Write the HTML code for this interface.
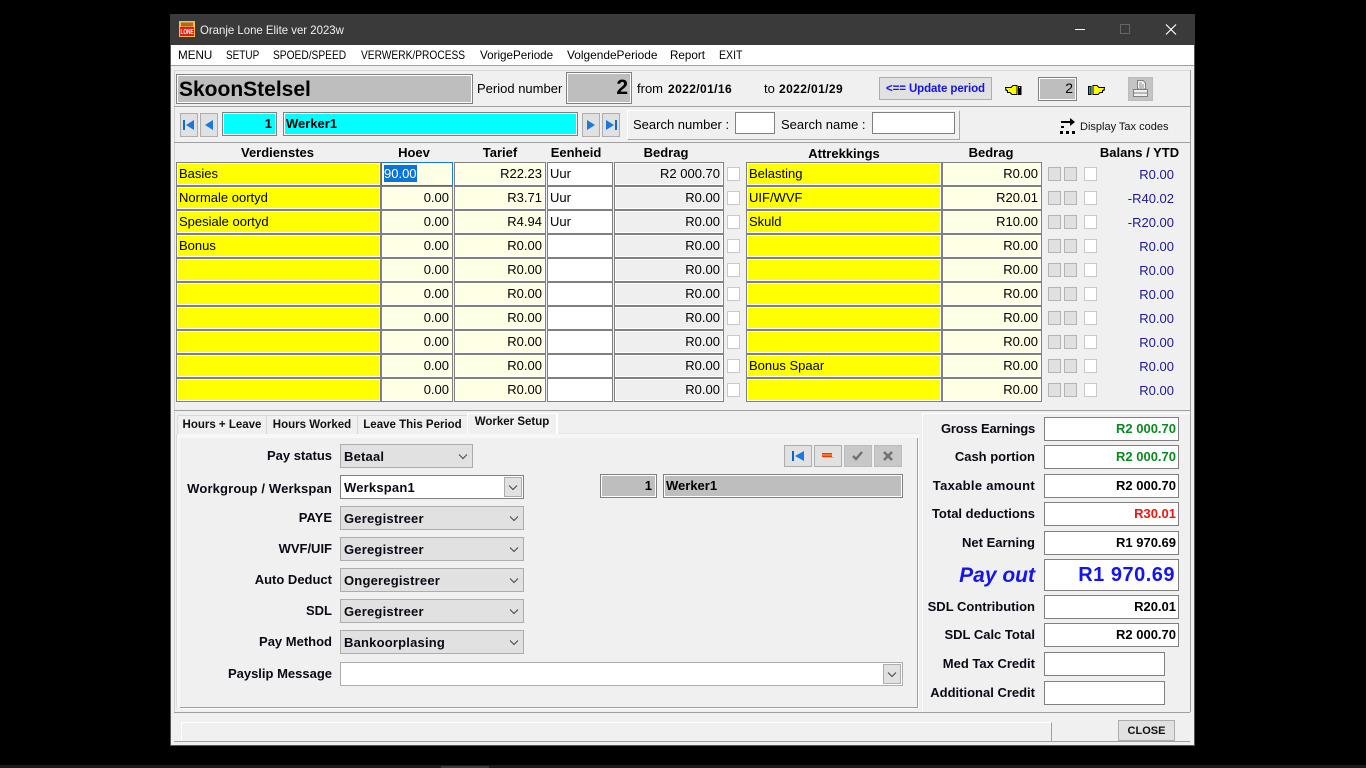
<!DOCTYPE html>
<html><head><meta charset="utf-8"><title>Oranje Lone Elite</title>
<style>
html,body{margin:0;padding:0;background:#000;width:1366px;height:768px;overflow:hidden}
*{box-sizing:border-box}
body{font-family:"Liberation Sans",Arial,sans-serif;font-size:13px;color:#000;position:relative}
.a,.t,.f,.r>div{position:absolute}
.t{white-space:nowrap;line-height:16px}
.lb{font-weight:bold;text-align:right;white-space:nowrap;position:absolute;line-height:16px;font-size:13px;color:#0a0a14;direction:rtl;unicode-bidi:plaintext}
.f{border:1px solid #808080;box-shadow:inset 0 0 0 1px #fff;white-space:nowrap;overflow:hidden;padding:0 2px;line-height:20px}
.r{position:absolute;left:0;top:0;width:1366px;height:24px}
.r>div{top:0;height:24px;border:1px solid #808080;box-shadow:inset 0 0 0 1px #fff;line-height:21px;padding:0 3px;white-space:nowrap;overflow:hidden}
.r>.c1{left:176px;width:205px;background:#ff0;padding-left:2px}
.r>.c2{left:381px;width:72px;background:#ffffe6;text-align:right;padding-right:3px}
.r>.c3{left:454px;width:92px;background:#ffffe6;text-align:right}
.r>.c4{left:547px;width:66px;background:#fff;padding-left:2px}
.r>.c5{left:614px;width:110px;background:#efefef;text-align:right}
.r>.c6{left:746px;width:196px;background:#ff0;padding-left:2px}
.r>.c7{left:942px;width:100px;background:#ffffe6;text-align:right}
.r>.k{top:5px;height:14px;width:13px;border:1px solid #c8c8c8;background:#fff;box-shadow:none;padding:0}
.r>.k1{left:727px}.r>.k2{left:1084px}
.r>.g{top:5px;height:14px;width:13px;border:1px solid #b4b4b4;background:#e1e1e1;box-shadow:none;padding:0}
.r>.g1{left:1048px}.r>.g2{left:1064px}
.r>.y{left:1090px;width:84px;text-align:right;border:0;box-shadow:none;background:none;color:#1a1a96;padding:0;top:2px}
.h{position:absolute;font-weight:bold;text-align:center;white-space:nowrap;line-height:16px}
.btn{position:absolute;border:1px solid #adadad;background:#e1e1e1}
.sel{position:absolute;left:340px;width:184px;height:24px;border:1px solid #adadad;background:#e1e1e1;font-weight:bold;padding-left:3px;line-height:24px;letter-spacing:.2px;color:#0a0a14}
.sel svg{position:absolute;right:2px;top:8px}
.val{position:absolute;left:1044px;width:135px;height:24px;border:1px solid #808080;background:#fff;text-align:right;font-weight:bold;padding-right:2px;line-height:22px}
.tab{position:absolute;top:415px;height:19px;border:1px solid #d9d9d9;border-bottom:0;background:#f0f0f0;font-size:11.5px;font-weight:bold;text-align:center;line-height:18px;color:#111;white-space:nowrap}
.m{position:absolute;top:47px;font-size:12px;line-height:16px;color:#000;white-space:nowrap;transform-origin:left center}
.ln{position:absolute;background:#a0a0a0}
.wl{position:absolute;background:#fff}
</style></head><body>

<div class="a" style="left:0;top:765px;width:1366px;height:3px;background:#1a1a1a"></div>
<div class="a" style="left:441px;top:766px;width:48px;height:2px;background:#3a3a3a"></div>

<!-- window -->
<div class="a" style="left:170px;top:14px;width:1025px;height:732px;background:#f0f0f0;border:1px solid #555"></div>
<div class="a" style="left:170px;top:14px;width:1025px;height:31px;background:#3a3a3a"></div>
<svg class="a" style="left:179px;top:21px" width="16" height="16" viewBox="0 0 16 16"><rect width="16" height="16" fill="#f6bc50"/><rect x="2" y="1.5" width="12" height="4" fill="#b06a20"/><rect x="1" y="6" width="14" height="9" fill="#e81c10"/><text x="8" y="13" font-size="7" font-weight="bold" fill="#fff" text-anchor="middle" textLength="13" lengthAdjust="spacingAndGlyphs" font-family="Liberation Sans">LONE</text></svg>
<div class="t" style="left:200px;top:22px;color:#f0f0f0;font-size:12px;transform:scaleX(.95);transform-origin:left center">Oranje Lone Elite ver 2023w</div>
<svg class="a" style="left:1075px;top:24px" width="102" height="14" viewBox="0 0 102 14"><line x1="0" y1="5.5" x2="10" y2="5.5" stroke="#fff"/><rect x="45.5" y="0.5" width="9" height="9" fill="none" stroke="#666"/><path d="M91 0.5L101 10.5M101 0.5L91 10.5" stroke="#fff" stroke-width="1.2"/></svg>

<div class="a" style="left:171px;top:45px;width:1023px;height:20px;background:#fff"></div>
<div class="ln" style="left:171px;top:65px;width:1023px;height:1px"></div>
<div class="m" style="left:178px;transform:scaleX(.97)">MENU</div>
<div class="m" style="left:226px;transform:scaleX(.83)">SETUP</div>
<div class="m" style="left:273px;transform:scaleX(.85)">SPOED/SPEED</div>
<div class="m" style="left:361px;transform:scaleX(.85)">VERWERK/PROCESS</div>
<div class="m" style="left:480px;transform:scaleX(.97)">VorigePeriode</div>
<div class="m" style="left:567px;transform:scaleX(.99)">VolgendePeriode</div>
<div class="m" style="left:670px;transform:scaleX(.97)">Report</div>
<div class="m" style="left:719px;transform:scaleX(.88)">EXIT</div>

<div class="ln" style="left:174px;top:70px;width:1016px;height:1px;background:#d8d8d8"></div>
<div class="ln" style="left:1190px;top:70px;width:1px;height:642px"></div>
<div class="ln" style="left:174px;top:70px;width:1px;height:642px;background:#d0d0d0"></div>
<div class="ln" style="left:174px;top:106px;width:1016px;height:1px"></div>
<div class="ln" style="left:174px;top:142px;width:1016px;height:1px"></div>
<div class="ln" style="left:174px;top:410px;width:1016px;height:1px"></div>
<div class="ln" style="left:174px;top:712px;width:1016px;height:1px"></div>

<!-- header row -->
<div class="f" style="left:176px;top:74px;width:297px;height:30px;background:#bebebe;font-weight:bold;font-size:21px;line-height:29px;padding-left:2px">SkoonStelsel</div>
<div class="t" style="left:477px;top:81px">Period number</div>
<div class="f" style="left:566px;top:72px;width:66px;height:32px;background:#bebebe;font-weight:bold;font-size:21px;line-height:29px;text-align:right;padding-right:3px">2</div>
<div class="t" style="left:637px;top:81px">from</div>
<div class="t" style="left:668px;top:81px;font-weight:bold;font-size:12px;letter-spacing:.4px">2022/01/16</div>
<div class="t" style="left:764px;top:81px">to</div>
<div class="t" style="left:779px;top:81px;font-weight:bold;font-size:12px;letter-spacing:.4px">2022/01/29</div>
<div class="btn" style="left:879px;top:77px;width:113px;height:23px;background:#e1e1e1;color:#1414e6;font-weight:bold;font-size:11.5px;text-align:center;line-height:23px;letter-spacing:-.1px">&lt;== Update period</div>
<svg class="a" style="left:1005px;top:84px" width="17" height="12" viewBox="0 0 17 12"><path d="M0 3.5H6L8 1.5H12V10.5H7L5 8.5H2.5V6.5H1V5H0Z" fill="#ff0" stroke="#000" stroke-width="1"/><rect x="13" y="2" width="3.5" height="9" fill="#000"/><rect x="14" y="3" width="1" height="1" fill="#ff0"/></svg>
<div class="f" style="left:1038px;top:77px;width:39px;height:24px;background:#bebebe;text-align:right;font-size:14px;line-height:21px;padding-right:3px">2</div>
<svg class="a" style="left:1088px;top:84px" width="17" height="12" viewBox="0 0 17 12"><path d="M17 3.5H11L9 1.5H5V10.5H10L12 8.5H14.5V6.5H16V5H17Z" fill="#ff0" stroke="#000" stroke-width="1"/><rect x="0" y="2" width="3.5" height="9" fill="#000"/><rect x="1" y="3" width="1.5" height="7" fill="#0ab0b0"/></svg>
<div class="a" style="left:1128px;top:77px;width:25px;height:24px;background:#c4c4c4;border:1px solid #bcbcbc"></div>
<svg class="a" style="left:1132px;top:80px" width="17" height="18" viewBox="0 0 17 18"><path d="M5.5 .5H11L13.5 3V9H5.5Z" fill="#f4f4f4" stroke="#808080"/><path d="M7 3H10M7 5H12M7 7H12" stroke="#909090"/><path d="M1.5 9.5H15.5V16.5H1.5Z" fill="#f0f0f0" stroke="#808080"/><path d="M1.5 13H15.5" stroke="#808080"/></svg>

<!-- worker row -->
<div class="btn" style="left:180px;top:113px;width:18px;height:24px"></div>
<svg class="a" style="left:182px;top:119px" width="14" height="12" viewBox="0 0 14 12"><rect x="1" y="1" width="2" height="10" fill="#1068d0"/><path d="M12 1V11L4 6Z" fill="#1a78e0"/></svg>
<div class="btn" style="left:200px;top:113px;width:18px;height:24px"></div>
<svg class="a" style="left:203px;top:119px" width="12" height="12" viewBox="0 0 12 12"><path d="M10 1V11L2 6Z" fill="#1a78e0"/></svg>
<div class="f" style="left:222px;top:112px;width:55px;height:24px;background:#0ff;text-align:right;font-weight:bold;line-height:21px;padding-right:4px;font-size:13px">1</div>
<div class="f" style="left:283px;top:112px;width:295px;height:24px;background:#0ff;font-weight:bold;line-height:22px;font-size:13px">Werker1</div>
<div class="btn" style="left:582px;top:113px;width:18px;height:24px"></div>
<svg class="a" style="left:585px;top:119px" width="12" height="12" viewBox="0 0 12 12"><path d="M2 1V11L10 6Z" fill="#1a78e0"/></svg>
<div class="btn" style="left:602px;top:113px;width:18px;height:24px"></div>
<svg class="a" style="left:604px;top:119px" width="14" height="12" viewBox="0 0 14 12"><path d="M2 1V11L10 6Z" fill="#1a78e0"/><rect x="11" y="1" width="2" height="10" fill="#1068d0"/></svg>

<div class="a" style="left:627px;top:110px;width:333px;height:30px;border:1px solid #a8a8a8;border-top-color:#fff;border-left-color:#fff"></div>
<div class="t" style="left:633px;top:117px">Search number :</div>
<div class="a" style="left:735px;top:112px;width:40px;height:22px;background:#fff;border:1px solid #808080"></div>
<div class="t" style="left:781px;top:117px">Search name :</div>
<div class="a" style="left:872px;top:112px;width:83px;height:22px;background:#fff;border:1px solid #808080"></div>
<svg class="a" style="left:1060px;top:117px" width="16" height="17" viewBox="0 0 16 17"><path d="M1 4H10V1L15 5L10 9V6H1Z" fill="#000"/><rect x="1" y="9" width="3" height="2" fill="#000"/><rect x="0" y="14" width="3" height="3" fill="#000"/><rect x="6" y="14" width="3" height="3" fill="#000"/><rect x="12" y="14" width="3" height="3" fill="#000"/></svg>
<div class="t" style="left:1080px;top:119px;font-size:11px;color:#111">Display Tax codes</div>

<!-- headers -->
<div class="h" style="left:176px;top:145px;width:203px">Verdienstes</div>
<div class="h" style="left:381px;top:145px;width:66px">Hoev</div>
<div class="h" style="left:454px;top:145px;width:92px">Tarief</div>
<div class="h" style="left:547px;top:145px;width:58px">Eenheid</div>
<div class="h" style="left:614px;top:145px;width:104px">Bedrag</div>
<div class="h" style="left:746px;top:146px;width:196px">Attrekkings</div>
<div class="h" style="left:942px;top:145px;width:98px">Bedrag</div>
<div class="h" style="left:1099px;top:145px;width:81px">Balans / YTD</div>

<!-- rows -->
<div class="r" style="top:162px"><div class="c1">Basies</div><div class="c2" style="text-align:left;padding-left:2px;border-color:#1a78d8;box-shadow:none"><span style="background:#0a74d8;color:#fff;display:inline-block;line-height:17px;margin-top:2px;vertical-align:top">90.00</span></div><div class="c3">R22.23</div><div class="c4">Uur</div><div class="c5">R2 000.70</div><div class="k k1"></div><div class="c6">Belasting</div><div class="c7">R0.00</div><div class="g g1"></div><div class="g g2"></div><div class="k k2"></div><div class="y">R0.00</div></div>
<div class="r" style="top:186px"><div class="c1">Normale oortyd</div><div class="c2">0.00</div><div class="c3">R3.71</div><div class="c4">Uur</div><div class="c5">R0.00</div><div class="k k1"></div><div class="c6">UIF/WVF</div><div class="c7">R20.01</div><div class="g g1"></div><div class="g g2"></div><div class="k k2"></div><div class="y">-R40.02</div></div>
<div class="r" style="top:210px"><div class="c1">Spesiale oortyd</div><div class="c2">0.00</div><div class="c3">R4.94</div><div class="c4">Uur</div><div class="c5">R0.00</div><div class="k k1"></div><div class="c6">Skuld</div><div class="c7">R10.00</div><div class="g g1"></div><div class="g g2"></div><div class="k k2"></div><div class="y">-R20.00</div></div>
<div class="r" style="top:234px"><div class="c1">Bonus</div><div class="c2">0.00</div><div class="c3">R0.00</div><div class="c4"></div><div class="c5">R0.00</div><div class="k k1"></div><div class="c6"></div><div class="c7">R0.00</div><div class="g g1"></div><div class="g g2"></div><div class="k k2"></div><div class="y">R0.00</div></div>
<div class="r" style="top:258px"><div class="c1"></div><div class="c2">0.00</div><div class="c3">R0.00</div><div class="c4"></div><div class="c5">R0.00</div><div class="k k1"></div><div class="c6"></div><div class="c7">R0.00</div><div class="g g1"></div><div class="g g2"></div><div class="k k2"></div><div class="y">R0.00</div></div>
<div class="r" style="top:282px"><div class="c1"></div><div class="c2">0.00</div><div class="c3">R0.00</div><div class="c4"></div><div class="c5">R0.00</div><div class="k k1"></div><div class="c6"></div><div class="c7">R0.00</div><div class="g g1"></div><div class="g g2"></div><div class="k k2"></div><div class="y">R0.00</div></div>
<div class="r" style="top:306px"><div class="c1"></div><div class="c2">0.00</div><div class="c3">R0.00</div><div class="c4"></div><div class="c5">R0.00</div><div class="k k1"></div><div class="c6"></div><div class="c7">R0.00</div><div class="g g1"></div><div class="g g2"></div><div class="k k2"></div><div class="y">R0.00</div></div>
<div class="r" style="top:330px"><div class="c1"></div><div class="c2">0.00</div><div class="c3">R0.00</div><div class="c4"></div><div class="c5">R0.00</div><div class="k k1"></div><div class="c6"></div><div class="c7">R0.00</div><div class="g g1"></div><div class="g g2"></div><div class="k k2"></div><div class="y">R0.00</div></div>
<div class="r" style="top:354px"><div class="c1"></div><div class="c2">0.00</div><div class="c3">R0.00</div><div class="c4"></div><div class="c5">R0.00</div><div class="k k1"></div><div class="c6">Bonus Spaar</div><div class="c7">R0.00</div><div class="g g1"></div><div class="g g2"></div><div class="k k2"></div><div class="y">R0.00</div></div>
<div class="r" style="top:378px"><div class="c1"></div><div class="c2">0.00</div><div class="c3">R0.00</div><div class="c4"></div><div class="c5">R0.00</div><div class="k k1"></div><div class="c6"></div><div class="c7">R0.00</div><div class="g g1"></div><div class="g g2"></div><div class="k k2"></div><div class="y">R0.00</div></div>

<!-- tabs panel -->
<div class="a" style="left:176px;top:433px;width:743px;height:275px;border:1px solid #dcdcdc;border-right:0;border-bottom:0;background:#f7f7f7"></div>
<div class="a" style="left:180px;top:438px;width:738px;height:270px;background:#f0f0f0;border-right:1px solid #a0a0a0;border-bottom:1px solid #a0a0a0;box-shadow:0 1px 0 #fff,1px 0 0 #fff"></div>
<div class="wl" style="left:176px;top:433px;width:743px;height:1px;background:#e8e8e8"></div>
<div class="tab" style="left:177px;width:90px">Hours + Leave</div>
<div class="tab" style="left:266px;width:92px">Hours Worked</div>
<div class="tab" style="left:357px;width:111px">Leave This Period</div>
<div class="tab" style="left:467px;top:413px;width:91px;height:21px;line-height:17px;border-color:#fff;border-width:1px 2px 0 1px;background:#f0f0f0">Worker Setup</div>

<div class="lb" style="left:180px;width:152px;top:448px">Pay status</div>
<div class="lb" style="left:180px;width:152px;top:481px;letter-spacing:.15px">Workgroup / Werkspan</div>
<div class="lb" style="left:180px;width:152px;top:510px">PAYE</div>
<div class="lb" style="left:180px;width:152px;top:541px">WVF/UIF</div>
<div class="lb" style="left:180px;width:152px;top:572px">Auto Deduct</div>
<div class="lb" style="left:180px;width:152px;top:603px">SDL</div>
<div class="lb" style="left:180px;width:152px;top:634px">Pay Method</div>
<div class="lb" style="left:180px;width:152px;top:666px">Payslip Message</div>

<div class="sel" style="top:444px;width:133px">Betaal<svg width="14" height="8" viewBox="0 0 14 8"><path d="M3 1.5L7 5.5L11 1.5" fill="none" stroke="#444"/></svg></div>
<div class="sel" style="top:475px;background:#fff;border-color:#808080">Werkspan1<div class="a" style="right:1px;top:1px;width:18px;height:20px;background:#e1e1e1;border:1px solid #adadad"></div><svg width="14" height="8" viewBox="0 0 14 8" style="right:3px"><path d="M3 1.5L7 5.5L11 1.5" fill="none" stroke="#444"/></svg></div>
<div class="sel" style="top:506px">Geregistreer<svg width="14" height="8" viewBox="0 0 14 8"><path d="M3 1.5L7 5.5L11 1.5" fill="none" stroke="#444"/></svg></div>
<div class="sel" style="top:537px">Geregistreer<svg width="14" height="8" viewBox="0 0 14 8"><path d="M3 1.5L7 5.5L11 1.5" fill="none" stroke="#444"/></svg></div>
<div class="sel" style="top:568px">Ongeregistreer<svg width="14" height="8" viewBox="0 0 14 8"><path d="M3 1.5L7 5.5L11 1.5" fill="none" stroke="#444"/></svg></div>
<div class="sel" style="top:599px">Geregistreer<svg width="14" height="8" viewBox="0 0 14 8"><path d="M3 1.5L7 5.5L11 1.5" fill="none" stroke="#444"/></svg></div>
<div class="sel" style="top:630px">Bankoorplasing<svg width="14" height="8" viewBox="0 0 14 8"><path d="M3 1.5L7 5.5L11 1.5" fill="none" stroke="#444"/></svg></div>
<div class="sel" style="top:662px;width:563px;background:#fff;border-color:#adadad"><div class="a" style="right:1px;top:1px;width:18px;height:20px;background:#e1e1e1;border:1px solid #adadad"></div><svg width="14" height="8" viewBox="0 0 14 8" style="right:3px"><path d="M3 1.5L7 5.5L11 1.5" fill="none" stroke="#444"/></svg></div>

<div class="btn" style="left:784px;top:445px;width:28px;height:22px"></div>
<svg class="a" style="left:791px;top:450px" width="14" height="12" viewBox="0 0 14 12"><rect x="1" y="1" width="2" height="10" fill="#0a64c8"/><path d="M13 1V11L4 6Z" fill="#1a78e0"/></svg>
<div class="btn" style="left:814px;top:445px;width:28px;height:22px"></div>
<svg class="a" style="left:821px;top:452px" width="14" height="8" viewBox="0 0 14 8"><rect x="1" y="1" width="10" height="4" fill="#e83c08"/><rect x="1" y="2.5" width="10" height="1" fill="#ffb040"/><rect x="2" y="5" width="11" height="1" fill="#bbb"/></svg>
<div class="btn" style="left:844px;top:445px;width:28px;height:22px;background:#c8c8c8;border-color:#bcbcbc"></div>
<svg class="a" style="left:851px;top:450px" width="14" height="12" viewBox="0 0 14 12"><path d="M2 6L5 9L11 2" fill="none" stroke="#707070" stroke-width="2.4"/></svg>
<div class="btn" style="left:874px;top:445px;width:28px;height:22px;background:#c8c8c8;border-color:#bcbcbc"></div>
<svg class="a" style="left:881px;top:450px" width="14" height="12" viewBox="0 0 14 12"><path d="M3 2L11 10M11 2L3 10" fill="none" stroke="#707070" stroke-width="2.4"/></svg>
<div class="f" style="left:600px;top:474px;width:57px;height:24px;background:#bebebe;text-align:right;font-weight:bold;line-height:21px;padding-right:4px">1</div>
<div class="f" style="left:663px;top:474px;width:240px;height:24px;background:#bebebe;font-weight:bold;line-height:22px">Werker1</div>

<!-- totals -->
<div class="a" style="left:922px;top:413px;width:268px;height:299px;border-left:1px solid #fff;border-top:1px solid #fff"></div>
<div class="lb" style="left:924px;width:111px;top:421px;letter-spacing:-.2px">Gross Earnings</div>
<div class="lb" style="left:924px;width:111px;top:449px">Cash portion</div>
<div class="lb" style="left:924px;width:111px;top:478px;letter-spacing:.3px">Taxable amount</div>
<div class="lb" style="left:924px;width:111px;top:506px">Total deductions</div>
<div class="lb" style="left:924px;width:111px;top:535px">Net Earning</div>
<div class="lb" style="left:924px;width:111px;top:564px;color:#1414f0;font-size:21px;font-style:italic;line-height:24px">Pay out</div>
<div class="lb" style="left:924px;width:111px;top:599px">SDL Contribution</div>
<div class="lb" style="left:924px;width:111px;top:627px">SDL Calc Total</div>
<div class="lb" style="left:924px;width:111px;top:656px">Med Tax Credit</div>
<div class="lb" style="left:924px;width:111px;top:685px">Additional Credit</div>
<div class="val" style="top:417px;color:#0a8a20">R2 000.70</div>
<div class="val" style="top:445px;color:#0a8a20">R2 000.70</div>
<div class="val" style="top:474px">R2 000.70</div>
<div class="val" style="top:502px;color:#f01414">R30.01</div>
<div class="val" style="top:531px">R1 970.69</div>
<div class="val" style="top:559px;height:32px;color:#1414f0;font-size:20px;line-height:30px;padding-right:3px;letter-spacing:.5px">R1 970.69</div>
<div class="val" style="top:595px">R20.01</div>
<div class="val" style="top:623px">R2 000.70</div>
<div class="val" style="top:652px;width:121px"></div>
<div class="val" style="top:681px;width:121px"></div>

<!-- status -->
<div class="a" style="left:181px;top:722px;width:871px;height:20px;border-top:1px solid #fff;border-left:1px solid #fff;border-right:1px solid #a0a0a0"></div>
<div class="ln" style="left:174px;top:741px;width:1016px;height:1px"></div>
<div class="btn" style="left:1118px;top:720px;width:57px;height:21px;font-weight:bold;font-size:11px;text-align:center;line-height:21px;color:#111">CLOSE</div>
</body></html>
